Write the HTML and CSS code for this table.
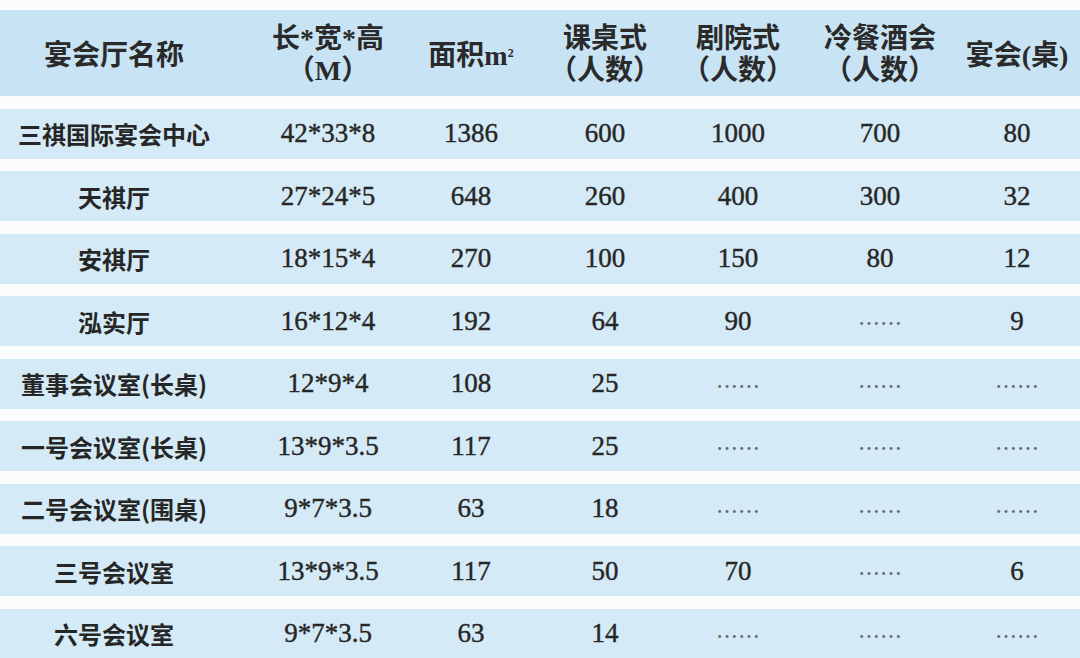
FILE: index.html
```html
<!DOCTYPE html>
<html lang="zh-CN">
<head>
<meta charset="utf-8">
<title>宴会厅</title>
<link rel="stylesheet" href="styles.css">
</head>
<body>
<div class="table">
  <div class="row head">
    <div class="cell">宴会厅名称</div>
    <div class="cell"><div class="two"><span>长*宽*高</span><span>（M）</span></div></div>
    <div class="cell">面积m<sup>2</sup></div>
    <div class="cell"><div class="two"><span>课桌式</span><span>（人数）</span></div></div>
    <div class="cell"><div class="two"><span>剧院式</span><span>（人数）</span></div></div>
    <div class="cell"><div class="two"><span>冷餐酒会</span><span>（人数）</span></div></div>
    <div class="cell">宴会(桌)</div>
  </div>
  <div class="row"><div class="cell name">三祺国际宴会中心</div><div class="cell">42*33*8</div><div class="cell">1386</div><div class="cell">600</div><div class="cell">1000</div><div class="cell">700</div><div class="cell">80</div></div>
  <div class="row"><div class="cell name">天祺厅</div><div class="cell">27*24*5</div><div class="cell">648</div><div class="cell">260</div><div class="cell">400</div><div class="cell">300</div><div class="cell">32</div></div>
  <div class="row"><div class="cell name">安祺厅</div><div class="cell">18*15*4</div><div class="cell">270</div><div class="cell">100</div><div class="cell">150</div><div class="cell">80</div><div class="cell">12</div></div>
  <div class="row"><div class="cell name">泓实厅</div><div class="cell">16*12*4</div><div class="cell">192</div><div class="cell">64</div><div class="cell">90</div><div class="cell dots">……</div><div class="cell">9</div></div>
  <div class="row"><div class="cell name">董事会议室(长桌)</div><div class="cell">12*9*4</div><div class="cell">108</div><div class="cell">25</div><div class="cell dots">……</div><div class="cell dots">……</div><div class="cell dots">……</div></div>
  <div class="row"><div class="cell name">一号会议室(长桌)</div><div class="cell">13*9*3.5</div><div class="cell">117</div><div class="cell">25</div><div class="cell dots">……</div><div class="cell dots">……</div><div class="cell dots">……</div></div>
  <div class="row"><div class="cell name">二号会议室(围桌)</div><div class="cell">9*7*3.5</div><div class="cell">63</div><div class="cell">18</div><div class="cell dots">……</div><div class="cell dots">……</div><div class="cell dots">……</div></div>
  <div class="row"><div class="cell name">三号会议室</div><div class="cell">13*9*3.5</div><div class="cell">117</div><div class="cell">50</div><div class="cell">70</div><div class="cell dots">……</div><div class="cell">6</div></div>
  <div class="row"><div class="cell name">六号会议室</div><div class="cell">9*7*3.5</div><div class="cell">63</div><div class="cell">14</div><div class="cell dots">……</div><div class="cell dots">……</div><div class="cell dots">……</div></div>
</div>
</body>
</html>
```

FILE: styles.css
```css
html, body {
  margin: 0;
  padding: 0;
  background: #fafcfe;
}

body {
  width: 1080px;
  height: 658px;
  overflow: hidden;
  color: #262626;
  font-family: "Liberation Serif", "Noto Sans CJK SC", serif;
}

.table {
  display: flex;
  flex-direction: column;
  gap: 12.5px;
  padding-top: 10px;
}

.row {
  display: grid;
  grid-template-columns: 228px 200px 86px 182px 84px 200px 74px;
  height: 50px;
  background: #d4eaf6;
  font-size: 27px;
  -webkit-text-stroke: 0.4px #262626;
}

.row.head {
  height: 86px;
  background: #c8e4f4;
  font-weight: 700;
  font-size: 28px;
  color: #2a2a2a;
  -webkit-text-stroke: 0;
}

.cell {
  display: flex;
  align-items: center;
  justify-content: center;
  white-space: nowrap;
  min-width: 0;
}

.two {
  display: flex;
  flex-direction: column;
  align-items: center;
  line-height: 32px;
  padding-top: 3px;
}

.head sup {
  font-size: 12px;
  vertical-align: 14px;
  line-height: 0;
}

.name {
  font-family: "Noto Sans CJK SC", sans-serif;
  font-size: 24px;
  font-weight: 600;
  -webkit-text-stroke: 0;
}

.dots {
  font-family: "Noto Sans CJK SC", sans-serif;
  font-size: 22px;
  color: #6a6a6a;
  -webkit-text-stroke: 0;
}
```
